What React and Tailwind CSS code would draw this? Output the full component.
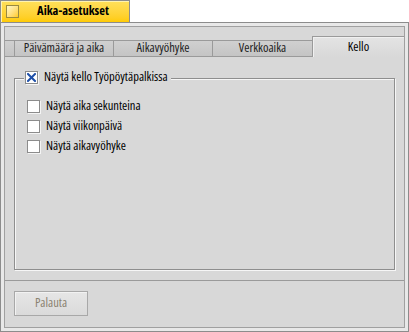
function Check({ checked }) {
  return (
    <div className="w-[13px] h-[13px] border border-[#8c8c8c] bg-white shadow-[1px_1px_0_#f4f4f4] flex items-center justify-center shrink-0">
      {checked && (
        <svg width="9" height="9" viewBox="0 0 9 9">
          <path d="M1 1L8 8M8 1L1 8" stroke="#1e4fa8" strokeWidth="2" strokeLinecap="square" />
        </svg>
      )}
    </div>
  );
}

function Tab({ label, w }) {
  return (
    <div
      className="shrink-0 whitespace-nowrap h-[17px] border-t border-l border-[#9a9a9a] border-b bg-gradient-to-b from-[#d0d0d0] to-[#c4c4c4] flex items-center justify-center text-[#222]"
      style={{ width: w }}
    >
      {label}
    </div>
  );
}

export default function App() {
  return (
    <div className="w-[409px] h-[332px] bg-white flex flex-col font-['Open_Sans',sans-serif] font-stretch-condensed text-[12.5px] leading-none text-black">
      {/* title tab */}
      <div className="h-[22px] w-[130px] border-l border-t border-r border-[#8c8c8c] bg-gradient-to-b from-[#ffe05a] to-[#ffcb00] flex items-center shadow-[inset_1px_1px_0_#fff3b0]">
        <div className="ml-[5px] w-[13px] h-[13px] border border-[#9a8a40] bg-gradient-to-br from-[#fff7c8] to-[#ffcc10]" />
        <div className="flex-1 text-center font-bold text-[12.5px] pr-[2px] whitespace-nowrap">Aika-asetukset</div>
      </div>
      {/* window */}
      <div className="flex-1 border border-[#8c8c8c] bg-[#e8e8e8] p-[3px] flex">
        <div className="flex-1 border border-[#a0a0a0] bg-[#d8d8d8] flex flex-col">
          <div className="h-[9px]" />
          {/* tab bar */}
          <div className="flex items-end h-[21px]">
            <div className="shrink-0 w-[9px] h-[17px] border-t border-b border-[#9a9a9a] bg-gradient-to-b from-[#d0d0d0] to-[#c4c4c4]" />
            <Tab label="Päivämäärä ja aika" w={99} />
            <Tab label="Aikavyöhyke" w={99} />
            <Tab label="Verkkoaika" w={100} />
            <div className="flex-1 h-[21px] border-t border-l border-[#9a9a9a] bg-gradient-to-b from-[#e4e4e4] to-[#d8d8d8] flex items-center justify-center pt-[1px] shadow-[inset_1px_1px_0_#f0f0f0]">
              Kello
            </div>
          </div>
          {/* tab content */}
          <div className="h-[224px] border-b border-[#9a9a9a] px-[9px] pt-[21px]">
            <div className="relative h-[192px] border border-[#8e8e8e] shadow-[1px_1px_0_#f6f6f6,inset_1px_1px_0_#f6f6f6]">
              <div className="absolute left-[9px] top-[-8px] bg-[#d8d8d8] pl-px pr-[3px] flex items-center gap-[6px] whitespace-nowrap">
                <Check checked />
                <span>Näytä kello Työpöytäpalkissa</span>
              </div>
              <div className="pt-[21px] pl-[12px] flex flex-col gap-[7px]">
                {["Näytä aika sekunteina", "Näytä viikonpäivä", "Näytä aikavyöhyke"].map((t) => (
                  <div key={t} className="flex items-center gap-[6px] h-[13px] whitespace-nowrap">
                    <Check />
                    <span>{t}</span>
                  </div>
                ))}
              </div>
            </div>
          </div>
          {/* button */}
          <div className="pt-[10px] pl-[9px]">
            <div className="w-[74px] h-[25px] border border-[#a8a8a8] bg-gradient-to-b from-[#e6e6e6] to-[#dadada] shadow-[inset_1px_1px_0_#f2f2f2] flex items-center justify-center text-[#8a8270]">
              Palauta
            </div>
          </div>
        </div>
      </div>
    </div>
  );
}
